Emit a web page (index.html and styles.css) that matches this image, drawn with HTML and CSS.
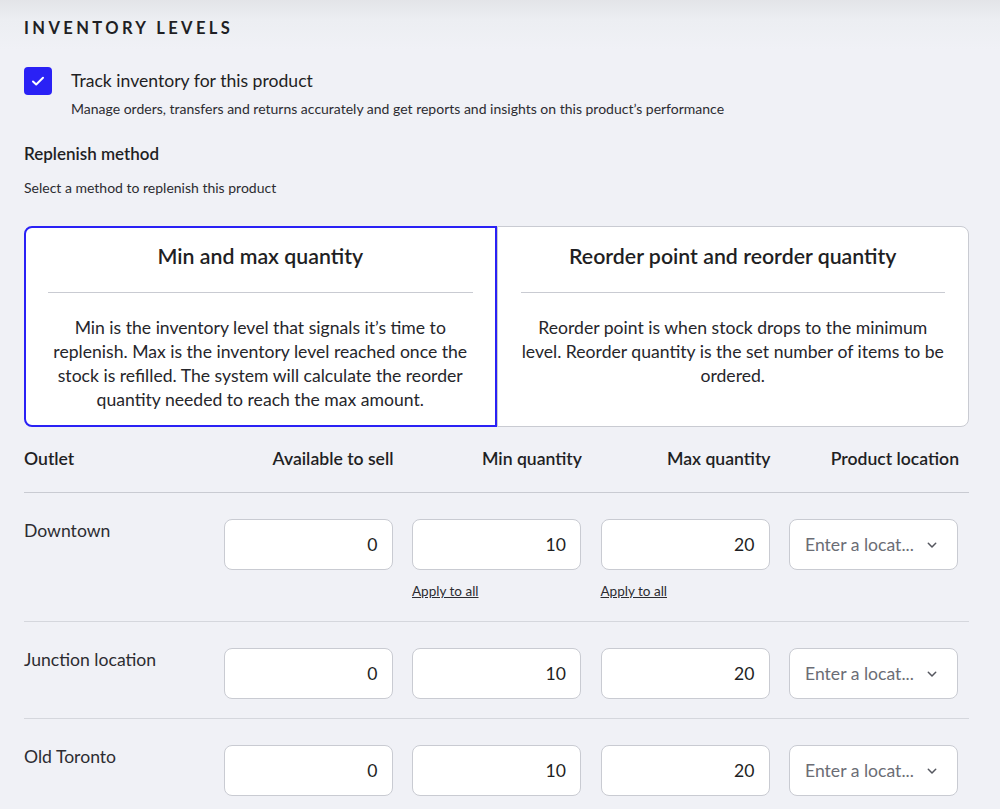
FILE: index.html
```html
<!DOCTYPE html>
<html lang="en">
<head>
<meta charset="utf-8">
<title>Inventory levels</title>
<link rel="stylesheet" href="styles.css">
</head>
<body>
<main class="page">
  <h2 class="section-title">INVENTORY LEVELS</h2>

  <div class="track">
    <span class="checkbox">
      <svg viewBox="0 0 16 16" width="16" height="16"><path d="M3 8.5l3.2 3L13 4.8" fill="none" stroke="#fff" stroke-width="2" stroke-linecap="round" stroke-linejoin="round"/></svg>
    </span>
    <div class="track-text">
      <div class="track-label">Track inventory for this product</div>
      <div class="track-help">Manage orders, transfers and returns accurately and get reports and insights on this product’s performance</div>
    </div>
  </div>

  <h3 class="sub-title">Replenish method</h3>
  <p class="sub-help">Select a method to replenish this product</p>

  <div class="methods">
    <div class="method selected">
      <div class="method-title">Min and max quantity</div>
      <div class="method-divider"></div>
      <p class="method-body">Min is the inventory level that signals it’s time to replenish. Max is the inventory level reached once the stock is refilled. The system will calculate the reorder quantity needed to reach the max amount.</p>
    </div>
    <div class="method">
      <div class="method-title">Reorder point and reorder quantity</div>
      <div class="method-divider"></div>
      <p class="method-body">Reorder point is when stock drops to the minimum level. Reorder quantity is the set number of items to be ordered.</p>
    </div>
  </div>

  <div class="table">
    <div class="row head">
      <div class="th th-left">Outlet</div>
      <div class="th">Available to sell</div>
      <div class="th">Min quantity</div>
      <div class="th">Max quantity</div>
      <div class="th">Product location</div>
    </div>

    <div class="row">
      <div class="cell-outlet">Downtown</div>
      <div class="cell"><div class="input">0</div></div>
      <div class="cell"><div class="input">10</div><a class="apply" href="#">Apply to all</a></div>
      <div class="cell"><div class="input">20</div><a class="apply" href="#">Apply to all</a></div>
      <div class="cell"><div class="select"><span>Enter a locat...</span><svg viewBox="0 0 12 12" width="12" height="12"><path d="M2.3 4.3L6 8l3.7-3.7" fill="none" stroke="#55575f" stroke-width="1.5" stroke-linecap="round" stroke-linejoin="round"/></svg></div></div>
    </div>

    <div class="row">
      <div class="cell-outlet">Junction location</div>
      <div class="cell"><div class="input">0</div></div>
      <div class="cell"><div class="input">10</div></div>
      <div class="cell"><div class="input">20</div></div>
      <div class="cell"><div class="select"><span>Enter a locat...</span><svg viewBox="0 0 12 12" width="12" height="12"><path d="M2.3 4.3L6 8l3.7-3.7" fill="none" stroke="#55575f" stroke-width="1.5" stroke-linecap="round" stroke-linejoin="round"/></svg></div></div>
    </div>

    <div class="row">
      <div class="cell-outlet">Old Toronto</div>
      <div class="cell"><div class="input">0</div></div>
      <div class="cell"><div class="input">10</div></div>
      <div class="cell"><div class="input">20</div></div>
      <div class="cell"><div class="select"><span>Enter a locat...</span><svg viewBox="0 0 12 12" width="12" height="12"><path d="M2.3 4.3L6 8l3.7-3.7" fill="none" stroke="#55575f" stroke-width="1.5" stroke-linecap="round" stroke-linejoin="round"/></svg></div></div>
    </div>
  </div>
</main>
</body>
</html>
```

FILE: styles.css
```css
html, body {
  margin: 0;
  padding: 0;
}
body {
  font-family: Lato, "Open Sans", sans-serif;
  color: #1f1f24;
  background: linear-gradient(to bottom, #e3e4e8 0px, #eceef2 20px, #f0f1f6 50px, #f0f1f6 100%);
  min-height: 809px;
  overflow: hidden;
}
.page {
  padding: 18px 31px 0 24px;
}
.section-title {
  margin: 0;
  font-size: 16.5px;
  line-height: 20px;
  font-weight: 700;
  letter-spacing: 3.4px;
}
.track {
  display: flex;
  gap: 19px;
  margin-top: 29px;
}
.checkbox {
  width: 28px;
  height: 28px;
  border-radius: 4px;
  background: #2a21f5;
  display: flex;
  align-items: center;
  justify-content: center;
  flex: none;
}
.track-label {
  font-size: 17.6px;
  line-height: 24px;
  margin-top: 2px;
}
.track-help {
  font-size: 14px;
  line-height: 18px;
  margin-top: 7px;
  color: #2c2c31;
}
.sub-title {
  margin: 26px 0 0;
  font-size: 17px;
  line-height: 20px;
  font-weight: 600;
}
.sub-help {
  margin: 15px 0 0;
  font-size: 14px;
  line-height: 18px;
  color: #2c2c31;
}
.methods {
  display: flex;
  margin-top: 29px;
}
.method {
  flex: 1;
  background: #fff;
  border: 1px solid #c9cbd2;
  padding: 16px 23px 14px;
  text-align: center;
  min-height: 201px;
  box-sizing: border-box;
}
.method:first-child {
  border-radius: 8px 0 0 8px;
  border-right: none;
}
.method:last-child {
  border-radius: 0 8px 8px 0;
}
.method.selected {
  border: 2px solid #2a21f5;
  padding: 15px 22px 13px;
}
.method-title {
  font-size: 21.3px;
  line-height: 26px;
  font-weight: 600;
}
.method-divider {
  height: 1px;
  background: #c9cbd2;
  margin-top: 23px;
}
.method-body {
  margin: 23px 0 0;
  font-size: 17.6px;
  line-height: 24px;
  color: #26262b;
}
.table {
  margin-top: 20px;
}
.row {
  display: grid;
  grid-template-columns: 1fr repeat(4, 169px);
  column-gap: 19.5px;
  padding: 26px 11px 19px 0;
  border-bottom: 1px solid #d5d7dd;
}
.row:last-child {
  border-bottom: none;
}
.row.head {
  padding: 0 10px 21px 0;
  border-bottom: 1px solid #c9cbd2;
}
.th {
  font-size: 17.6px;
  line-height: 24px;
  font-weight: 600;
  text-align: right;
  white-space: nowrap;
}
.th-left {
  text-align: left;
}
.cell-outlet {
  font-size: 17.6px;
  line-height: 24px;
  color: #2c2c31;
}
.cell {
  display: flex;
  flex-direction: column;
}
.input, .select {
  height: 51px;
  box-sizing: border-box;
  background: #fff;
  border: 1px solid #c9cbd2;
  border-radius: 8px;
  font-size: 17.6px;
  display: flex;
  align-items: center;
}
.input {
  justify-content: flex-end;
  padding-right: 14px;
  color: #1f1f24;
}
.select {
  justify-content: space-between;
  padding: 0 19px 0 15px;
  color: #6b6d75;
}
.apply {
  margin: 13px 0 3px;
  font-size: 13.5px;
  line-height: 16px;
  color: #2c2c31;
  text-decoration: underline;
}
```
